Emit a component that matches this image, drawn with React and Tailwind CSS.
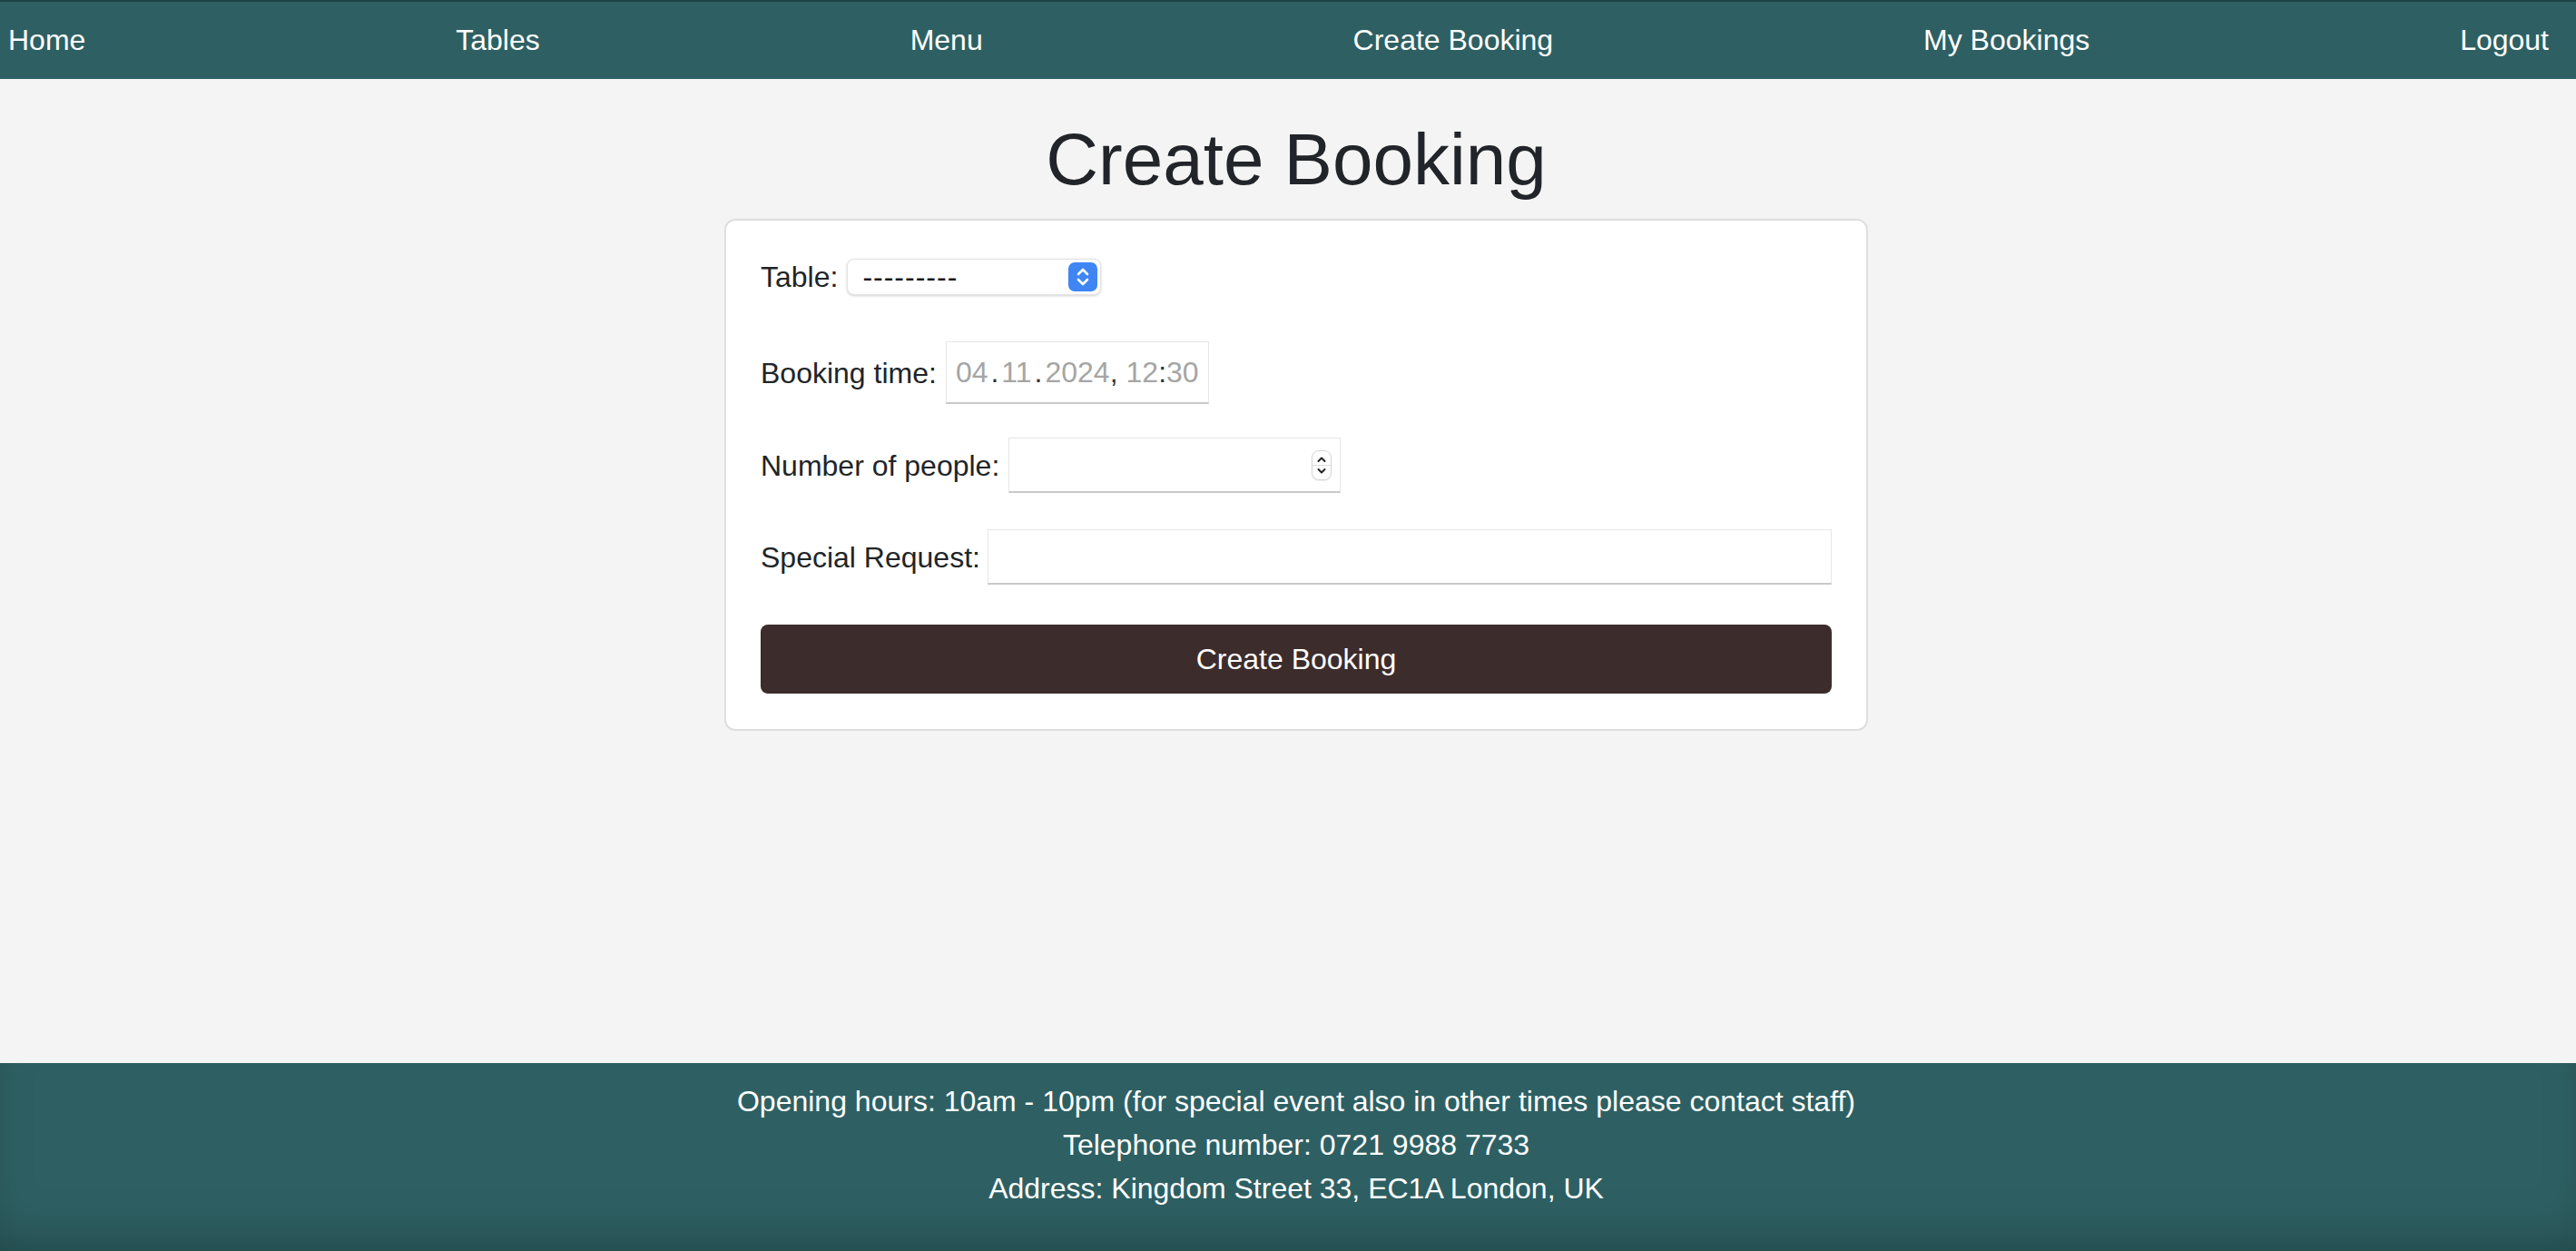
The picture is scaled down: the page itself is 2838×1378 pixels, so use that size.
import React, { useState } from 'react';

const navLinks = ['Home', 'Tables', 'Menu', 'Create Booking', 'My Bookings', 'Logout'];

const SelectArrows = () => (
  <div className="w-[32px] h-[32px] rounded-[7px] bg-[#3f86f4] flex items-center justify-center">
    <svg width="16" height="24" viewBox="0 0 16 24" fill="none" stroke="white" strokeWidth="2.6" strokeLinecap="round" strokeLinejoin="round">
      <path d="M3 9 L8 4 L13 9" />
      <path d="M3 15 L8 20 L13 15" />
    </svg>
  </div>
);

const Spinner = () => (
  <div className="w-[22px] h-[33px] rounded-[8px] border border-[#d6d6d6] bg-white flex flex-col items-center justify-center shadow-[0_1px_1px_rgba(0,0,0,0.08)]">
    <svg width="12" height="10" viewBox="0 0 12 10" fill="none" stroke="#222" strokeWidth="2" strokeLinecap="round" strokeLinejoin="round">
      <path d="M2.5 7 L6 3.5 L9.5 7" />
    </svg>
    <div className="w-full h-px bg-[#dcdcdc] my-[1px]"></div>
    <svg width="12" height="10" viewBox="0 0 12 10" fill="none" stroke="#222" strokeWidth="2" strokeLinecap="round" strokeLinejoin="round">
      <path d="M2.5 3 L6 6.5 L9.5 3" />
    </svg>
  </div>
);

const App = () => {
  const [form, setForm] = useState({ people: '', request: '' });

  const handleChange = (e) => {
    const { name, value } = e.target;
    setForm({ ...form, [name]: value });
  };

  return (
    <div className="min-h-screen flex flex-col bg-[#f4f4f4] font-['Liberation_Sans',Arial,sans-serif]">
      <nav className="h-[87px] border-t-2 border-[#1b4446] bg-[#2e6063] flex items-center justify-between pl-[9px] pr-[30px] pb-[2px] text-[32px] text-white">
        {navLinks.map((link) => (
          <a key={link} href="#" className="leading-none">{link}</a>
        ))}
      </nav>

      <main className="flex-1 pl-[18px]">
        <h1 className="mt-[43px] text-center text-[80px] leading-[92px] text-[#212529]">Create Booking</h1>

        {/* booking form */}
        <form className="mt-[19px] mx-auto w-[1260px] bg-white border-2 border-[#dedede] rounded-[12px] pt-[42px] pb-[39px] px-[38px] text-[32px] text-[#212529]">
          <div className="flex items-center gap-[10px] h-[40px]">
            <label>Table:</label>
            <div className="w-[280px] h-[40px] rounded-[8px] border border-[#e3e3e3] bg-white shadow-[0_1px_3px_rgba(0,0,0,0.18)] flex items-center justify-between pl-[16px] pr-[3px]">
              <span className="text-[#111] leading-none tracking-[1px]">---------</span>
              <SelectArrows />
            </div>
          </div>

          <div className="mt-[51px] flex items-center gap-[10px] h-[69px]">
            <label>Booking time:</label>
            <div className="w-[290px] h-[69px] border border-[#e6e6e6] border-b-2 border-b-[#c9c9c9] bg-white flex items-center pl-[10px] text-[#a5a5a5] leading-none">
              <span>04</span><span className="text-[#333] px-[3px]">.</span><span>11</span><span className="text-[#333] px-[3px]">.</span><span>2024</span><span className="text-[#333]">,</span><span className="ml-[9px]">12</span><span className="text-[#333]">:</span><span>30</span>
            </div>
          </div>

          <div className="mt-[37px] flex items-center gap-[10px] h-[61px]">
            <label>Number of people:</label>
            <div className="w-[366px] h-[61px] border border-[#e6e6e6] border-b-2 border-b-[#c9c9c9] bg-white flex items-center justify-end pr-[9px]">
              <input name="people" value={form.people} onChange={handleChange} className="flex-1 min-w-0 h-full outline-none px-[10px] bg-transparent" />
              <Spinner />
            </div>
          </div>

          <div className="mt-[40px] flex items-center gap-[8px] h-[61px]">
            <label className="whitespace-nowrap">Special Request:</label>
            <input
              name="request"
              value={form.request}
              onChange={handleChange}
              className="flex-1 h-[61px] border border-[#e6e6e6] border-b-2 border-b-[#c9c9c9] bg-white outline-none px-[10px]"
            />
          </div>

          <button type="button" className="mt-[44px] w-full h-[76px] rounded-[8px] bg-[#3d2c2c] text-white text-[32px]">
            Create Booking
          </button>
        </form>
      </main>

      <footer className="bg-[#2e6063] text-white text-[32px] leading-[48px] text-center pt-[18px] pb-[45px] pl-[18px] shadow-[inset_0_-30px_60px_-25px_rgba(0,0,0,0.3)]">
        <p>Opening hours: 10am - 10pm (for special event also in other times please contact staff)</p>
        <p>Telephone number: 0721 9988 7733</p>
        <p>Address: Kingdom Street 33, EC1A London, UK</p>
      </footer>
    </div>
  );
};

export default App;
